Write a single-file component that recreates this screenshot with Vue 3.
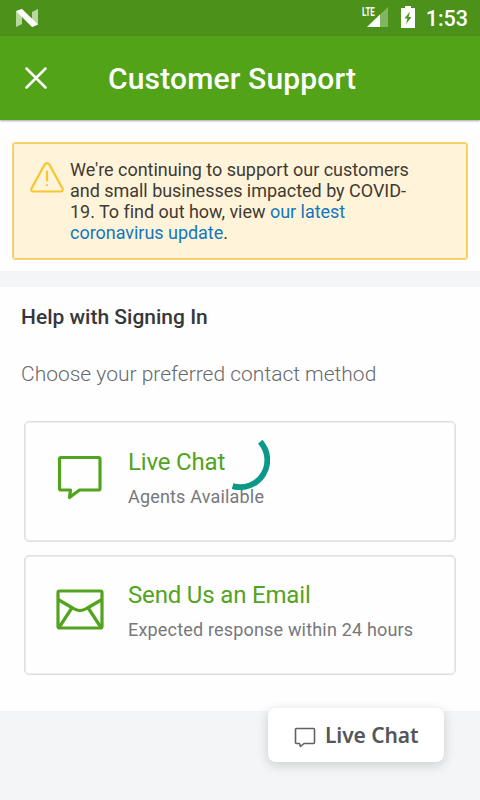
<script setup>
const methods = [
  { id: 'chat', title: 'Live Chat', detail: 'Agents Available' },
  { id: 'email', title: 'Send Us an Email', detail: 'Expected response within 24 hours' },
]
</script>

<template>
  <div class="screen">
    <div class="status">
      <svg class="n-logo" width="22" height="18" viewBox="0 0 22 18">
        <path d="M0 2.5 6 0v15L0 18zM22 0v15.5L16 18V3z" fill="#b9d8a0" />
        <path d="M0 2 6 0l16 15.500-6 2.500z" fill="#fff" />
      </svg>
      <div class="status-right">
        <svg class="signal" width="27" height="22" viewBox="0 0 27 22">
          <path d="M5 21 26 1v20z" fill="#82b562" />
          <path d="M5 21 18 8.600V21z" fill="#fff" />
          <path d="M0 0h15v11.500H0z" fill="#4c9119" />
          <g transform="scale(.66 1)"><text x="0" y="10">LTE</text></g>
        </svg>
        <svg class="battery" width="14" height="22" viewBox="0 0 14 22">
          <path d="M4 0h6v2h4v20H0V2h4z" fill="#fff" />
          <path d="M9 5.500 3.500 12.500h3L5 18 10.500 11H7.500z" fill="#4c9119" />
        </svg>
        <span class="time">1:53</span>
      </div>
    </div>

    <header class="bar">
      <svg class="close" width="22" height="22" viewBox="0 0 22 22">
        <path d="M1.500 1.500 20.500 20.500M20.500 1.500 1.500 20.500" stroke="#fff" stroke-width="2.500" stroke-linecap="round" />
      </svg>
      <h1>Customer Support</h1>
    </header>

    <section class="notice-area">
      <div class="notice">
        <svg class="warning" width="34" height="31" viewBox="0 0 34 31" fill="none" stroke="#f7c62d" stroke-width="2.200" stroke-linecap="round">
          <path d="M14.700 2.400Q17 0 19.300 2.400L32.500 26.500Q33.400 29.500 30.500 29.500H3.500Q.6 29.500 1.500 26.500Z" />
          <path d="M17 9.500v9M17 23v.2" />
        </svg>
        <p>We're continuing to support our customers<br>and small businesses impacted by COVID-<br>19. To find out how, view <a>our latest<br>coronavirus update</a>.</p>
      </div>
    </section>

    <main class="panel">
      <h2>Help with Signing In</h2>
      <p class="lead">Choose your preferred contact method</p>
      <div class="methods">
        <div v-for="m in methods" :key="m.id" class="card">
          <svg v-if="m.id === 'chat'" class="card-icon" width="48" height="48" viewBox="0 0 48 48" fill="none" stroke="#52a31d" stroke-width="3.200" stroke-linejoin="round">
            <path d="M5 3.500H42.500Q44 3.500 44 5V34.500Q44 36 42.500 36H23.500L13.500 43.500 14.500 36H5Q3.500 36 3.500 34.500V5Q3.500 3.500 5 3.500Z" />
          </svg>
          <svg v-else class="card-icon" width="48" height="48" viewBox="0 0 48 48" fill="none" stroke="#52a31d" stroke-width="3.200" stroke-linejoin="round">
            <rect x="2" y="4" width="44" height="37" rx="1.500" />
            <path d="M2 12.500 17.500 21.500Q24 25.500 30.500 21.500L46 12.500M15.500 21.500 3 40.500M32.500 21.500 45 40.500" />
          </svg>
          <div class="card-text">
            <h3>{{ m.title }}</h3>
            <p>{{ m.detail }}</p>
          </div>
        </div>
      </div>
    </main>

    <svg class="spinner" width="60" height="60" viewBox="0 0 60 60" fill="none" stroke="#08998a" stroke-width="5.800">
      <path d="M50.200 11.800A27.100 27.100 0 0 1 22.600 56.100" />
    </svg>

    <button class="chat-button">
      <svg width="22" height="21" viewBox="0 0 22 21" fill="none" stroke="#606164" stroke-width="1.600" stroke-linejoin="round">
        <path d="M2.500 1.500H19.500Q20.500 1.500 20.500 2.500V15.500Q20.500 16.500 19.500 16.500H10L6.500 19.500 5.500 16.500H2.500Q1.500 16.500 1.500 15.500V2.500Q1.500 1.500 2.500 1.500Z" />
      </svg>
      <span>Live Chat</span>
    </button>
  </div>
</template>

<style>
body { margin: 0; background: #f3f4f7; }
</style>

<style scoped>
.screen { position: relative; width: 480px; height: 800px; overflow: hidden; background: #f4f5f7; font-family: Roboto, sans-serif; color: #36373a; box-sizing: border-box; }
h1, h2, h3, p { margin: 0; font-weight: 400; white-space: nowrap; }
.status { height: 36px; background: #4c9119; display: flex; align-items: center; justify-content: space-between; padding: 0 12px 0 16px; box-sizing: border-box; }
.status-right { display: flex; align-items: center; }
.signal { margin-right: 12px; margin-top: -2px; }
.signal text { font: 700 12px Roboto, sans-serif; fill: #fff; }
.battery { margin-right: 11px; margin-top: -2px; }
.time { color: #fff; font-size: 21.500px; font-weight: 500; line-height: 36px; padding-top: 2px; }
.bar { position: relative; height: 84px; background: #53a318; display: flex; align-items: center; padding-left: 25px; box-shadow: 0 1px 2px rgba(0, 0, 0, .35); }
.close { margin-right: 61px; }
h1 { color: #fff; font-size: 30px; font-weight: 500; line-height: 40px; padding-top: 2px; letter-spacing: .16px; }
.notice-area { height: 151px; background: #fefefe; padding: 22px 12px 0; box-sizing: border-box; }
.notice { height: 118px; border: 1px solid #f4d477; border-radius: 3px; background: #fff4da; box-shadow: inset 0 0 0 1px #f3cf5c; display: flex; box-sizing: border-box; padding: 16px 0 0 17px; }
.warning { margin: 3px 6px 0 0; }
.notice p { font-size: 18px; line-height: 21px; letter-spacing: -.03px; color: #3f3a33; }
.notice a { color: #1177c0; }
.panel { margin-top: 16px; height: 424px; background: #fefefe; padding: 16px 24px 0; box-sizing: border-box; }
h2 { font-size: 21px; line-height: 28px; font-weight: 500; margin-left: -3px; }
.lead { font-size: 21px; line-height: 28px; font-weight: 300; color: #68696c; margin: 29px 0 0 -3px; }
.methods { display: flex; flex-direction: column; gap: 13px; margin-top: 33px; }
.card { height: 120px; border: 1px solid #dfdfe1; box-shadow: inset 0 0 0 1px #ebebed; border-radius: 5px; display: flex; box-sizing: border-box; padding: 24px 0 0 31px; }
.card:first-child { height: 121px; }
.card + .card { padding-top: 23px; }
.card-icon { margin: 8px 24px 0 0; }
h3 { color: #52a31d; font-size: 24px; line-height: 32px; letter-spacing: -.17px; }
.card-text p { color: #77787b; font-size: 18px; line-height: 24px; margin-top: 7px; letter-spacing: .18px; }
.spinner { position: absolute; left: 210px; top: 430px; }
.chat-button { position: absolute; left: 268px; top: 708px; width: 176px; height: 54px; border: 0; border-radius: 8px; background: #fff; box-shadow: 0 3px 12px rgba(40, 40, 50, .2); display: flex; align-items: center; padding: 0 0 0 26px; gap: 9px; color: #55565a; font: 600 21px "Noto Sans", sans-serif; letter-spacing: -.1px; white-space: nowrap; }
.chat-button svg { margin-top: 4px; }
</style>
